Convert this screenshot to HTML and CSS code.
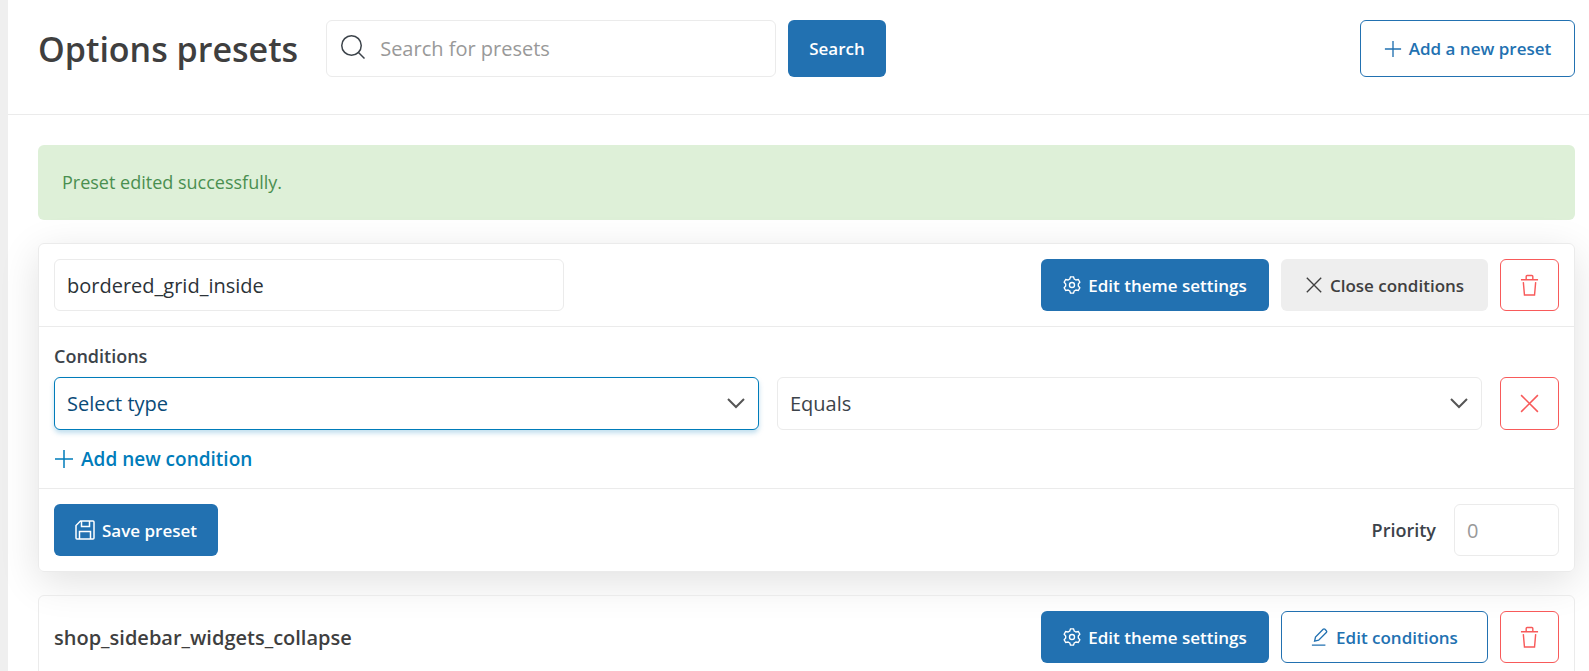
FILE: index.html
```
<!DOCTYPE html>
<html lang="en">
<head>
    <meta charset="UTF-8">
    <meta name="viewport" content="width=device-width, initial-scale=1.0">
    <title>Options presets</title>
    <link rel="stylesheet" href="styles.css">
</head>
<body>
    <svg class="sprite" aria-hidden="true">
        <symbol id="icon-search" viewBox="0 0 24 24">
            <circle cx="10.500" cy="10.500" r="9.750"/>
            <path d="M17.500 17.500l6 6"/>
        </symbol>
        <symbol id="icon-plus" viewBox="0 0 20 20">
            <path d="M10 1v18M1 10h18"/>
        </symbol>
        <symbol id="icon-close" viewBox="0 0 20 20">
            <path d="M2 2l16 16M18 2L2 18"/>
        </symbol>
        <symbol id="icon-gear" viewBox="0 0 20 20">
            <path d="M8.300 1h3.400l.9 2.500q1 .4 1.700.9l2.700-.5 1.700 3-1.700 2.100v2l1.700 2.100-1.700 3-2.700-.5q-.7.500-1.700.9l-.9 2.500H8.300l-.9-2.500q-1-.4-1.700-.9l-2.700.5-1.700-3L3 11V9L1.300 6.900l1.700-3 2.700.5q.7-.5 1.700-.9z"/>
            <circle cx="10" cy="10" r="2.800"/>
        </symbol>
        <symbol id="icon-trash" viewBox="0 0 20 24">
            <path d="M1 6.500h18M6.500 6V3q0-1 1-1h5q1 0 1 1v3M3.500 9l1.200 13.500h10.600L16.500 9"/>
        </symbol>
        <symbol id="icon-save" viewBox="0 0 20 20">
            <path d="M5.500 1H18q1 0 1 1v16q0 1-1 1H2q-1 0-1-1V5.500zM6.500 1v5.500h8V1M4.500 19v-7.500h11V19"/>
        </symbol>
        <symbol id="icon-pencil" viewBox="0 0 20 20">
            <path d="M1 19h15M4 14.500l1-4.500L13.500 1.500q1-1 2 0l1.500 1.500q1 1 0 2L8.500 13.500z"/>
        </symbol>
    </svg>

    <main class="page">
        <header class="page-header">
            <h1>Options presets</h1>
            <form class="search-form">
                <label class="search-box">
                    <svg class="icon icon-search"><use href="#icon-search"/></svg>
                    <input type="text" placeholder="Search for presets" aria-label="Search for presets">
                </label>
                <button type="button" class="btn btn-primary">Search</button>
            </form>
            <button type="button" class="btn btn-outline btn-add">
                <svg class="icon"><use href="#icon-plus"/></svg>Add a new preset
            </button>
        </header>

        <div class="content">
            <div class="notice">Preset edited successfully.</div>

            <section class="preset preset-open">
                <div class="preset-row">
                    <input type="text" class="field preset-name" value="bordered_grid_inside" aria-label="Preset name">
                    <div class="actions">
                        <button type="button" class="btn btn-primary btn-edit"><svg class="icon"><use href="#icon-gear"/></svg>Edit theme settings</button>
                        <button type="button" class="btn btn-grey btn-conditions"><svg class="icon"><use href="#icon-close"/></svg>Close conditions</button>
                        <button type="button" class="btn btn-danger" aria-label="Delete preset"><svg class="icon icon-trash"><use href="#icon-trash"/></svg></button>
                    </div>
                </div>

                <div class="conditions">
                    <h2>Conditions</h2>
                    <div class="condition">
                        <select class="field active" aria-label="Condition type">
                            <option>Select type</option>
                        </select>
                        <select class="field" aria-label="Comparison">
                            <option>Equals</option>
                            <option>Not equals</option>
                        </select>
                        <button type="button" class="btn btn-danger" aria-label="Remove condition"><svg class="icon icon-remove"><use href="#icon-close"/></svg></button>
                    </div>
                    <a href="#" class="add-condition"><svg class="icon"><use href="#icon-plus"/></svg>Add new condition</a>
                </div>

                <div class="preset-row">
                    <button type="button" class="btn btn-primary btn-save"><svg class="icon"><use href="#icon-save"/></svg>Save preset</button>
                    <div class="priority">
                        <label for="priority">Priority</label>
                        <input type="text" id="priority" class="field" placeholder="0">
                    </div>
                </div>
            </section>

            <section class="preset">
                <div class="preset-row">
                    <h2 class="preset-title">shop_sidebar_widgets_collapse</h2>
                    <div class="actions">
                        <button type="button" class="btn btn-primary btn-edit"><svg class="icon"><use href="#icon-gear"/></svg>Edit theme settings</button>
                        <button type="button" class="btn btn-outline btn-conditions"><svg class="icon"><use href="#icon-pencil"/></svg>Edit conditions</button>
                        <button type="button" class="btn btn-danger" aria-label="Delete preset"><svg class="icon icon-trash"><use href="#icon-trash"/></svg></button>
                    </div>
                </div>
            </section>
        </div>
    </main>
</body>
</html>
```
FILE: styles.css
```
* {
    box-sizing: border-box;
}

html {
    overflow-x: hidden;
    scrollbar-width: none;
}

body {
    margin: 0;
    background: #efefef;
    color: #3c434a;
    font-family: 'Segoe UI', 'Open Sans', 'Noto Sans', sans-serif;
    font-size: 18px;
}

button,
input,
select {
    font: inherit;
    color: inherit;
}

h1,
h2 {
    margin: 0;
    font-weight: 600;
}

.sprite {
    display: none;
}

.icon {
    width: 18px;
    height: 18px;
    flex: none;
    fill: none;
    stroke: currentColor;
    stroke-width: 1.5;
}

.icon-search {
    width: 24px;
    height: 24px;
    margin-bottom: 4px;
}

.icon-trash {
    width: 19px;
    height: 24px;
}

.icon-remove {
    width: 21px;
    height: 21px;
}

.btn-save .icon,
.add-condition .icon {
    width: 20px;
    height: 20px;
}

.page {
    min-height: 100vh;
    margin-left: 8px;
    background: #fff;
}

.page-header {
    display: flex;
    align-items: center;
    padding: 20px 14px 37px 30px;
    border-bottom: 1px solid #ebebeb;
}

h1 {
    margin-right: 28px;
    color: #3f3f3f;
    font-size: 34px;
    line-height: 56px;
    white-space: nowrap;
}

.search-form {
    display: flex;
    gap: 12px;
}

.search-box {
    display: flex;
    align-items: center;
    width: 450px;
    height: 57px;
    padding: 0 14px;
    gap: 15px;
    border: 1px solid #ebebeb;
    border-radius: 6px;
}

.search-box input {
    flex: 1;
    min-width: 0;
    padding: 0;
    border: 0;
    outline: none;
    background: none;
    font-size: 20px;
}

::placeholder {
    color: #999;
    opacity: 1;
}

.btn {
    display: flex;
    align-items: center;
    justify-content: center;
    gap: 7px;
    padding: 0 20px;
    border: 1px solid transparent;
    border-radius: 6px;
    background: #fff;
    font-size: 17px;
    font-weight: 600;
    white-space: nowrap;
    cursor: pointer;
}

.btn-primary {
    background: #2271b1;
    color: #fff;
}

.btn-outline {
    border-color: #2271b1;
    color: #2271b1;
}

.btn-grey {
    background: #eee;
    color: #3f3f3f;
}

.btn-danger {
    width: 59px;
    padding: 0;
    border-color: #f85a5a;
    color: #f85a5a;
}

.btn-add {
    width: 215px;
    height: 57px;
    margin-left: auto;
}

.btn-edit {
    width: 228px;
}

.btn-conditions {
    width: 207px;
}

.btn-save {
    width: 164px;
}

.content {
    display: flex;
    flex-direction: column;
    gap: 23px;
    padding: 30px 14px 30px 30px;
}

.notice {
    padding: 24px;
    border-radius: 6px;
    background: #def0d8;
    color: #4a8f50;
    line-height: 27px;
}

.preset {
    border: 1px solid #ebebeb;
    border-radius: 6px;
}

.preset-open {
    box-shadow: 0 10px 40px rgba(0, 0, 0, 0.12);
}

.preset-row {
    display: flex;
    align-items: center;
    justify-content: space-between;
    padding: 15px;
}

.preset-row .btn,
.field {
    height: 52px;
}

.field {
    padding: 0 12px;
    border: 1px solid #ebebeb;
    border-radius: 6px;
    outline: none;
    background: #fff;
    font-size: 20px;
}

.preset-name {
    width: 510px;
    color: #2c3338;
}

.preset-title {
    color: #3f3f3f;
    font-size: 20px;
}

.actions {
    display: flex;
    gap: 12px;
}

.conditions {
    padding: 15px;
    border: solid #ebebeb;
    border-width: 1px 0;
}

.conditions h2 {
    margin-bottom: 7px;
    font-size: 18px;
    line-height: 28px;
}

.condition {
    display: grid;
    grid-template-columns: 1fr 1fr auto;
    gap: 18px;
}

select.field {
    height: 53px;
    appearance: none;
    background: #fff url("data:image/svg+xml,%3Csvg xmlns='http://www.w3.org/2000/svg' width='18' height='11' fill='none' stroke='%23555' stroke-width='2'%3E%3Cpath d='M1 1l8 8 8-8'/%3E%3C/svg%3E") no-repeat right 13px center;
}

select.active {
    border-color: #007cba;
    box-shadow: 0 3px 5px rgba(0, 124, 186, 0.25);
    color: #0a4b78;
}

.add-condition {
    display: flex;
    align-items: center;
    gap: 7px;
    width: fit-content;
    margin-top: 15px;
    color: #007cba;
    font-size: 19px;
    font-weight: 600;
    line-height: 28px;
    text-decoration: none;
}

.priority {
    display: flex;
    align-items: center;
    gap: 18px;
    font-weight: 600;
}

.priority .field {
    width: 105px;
    font-weight: 400;
}
```
